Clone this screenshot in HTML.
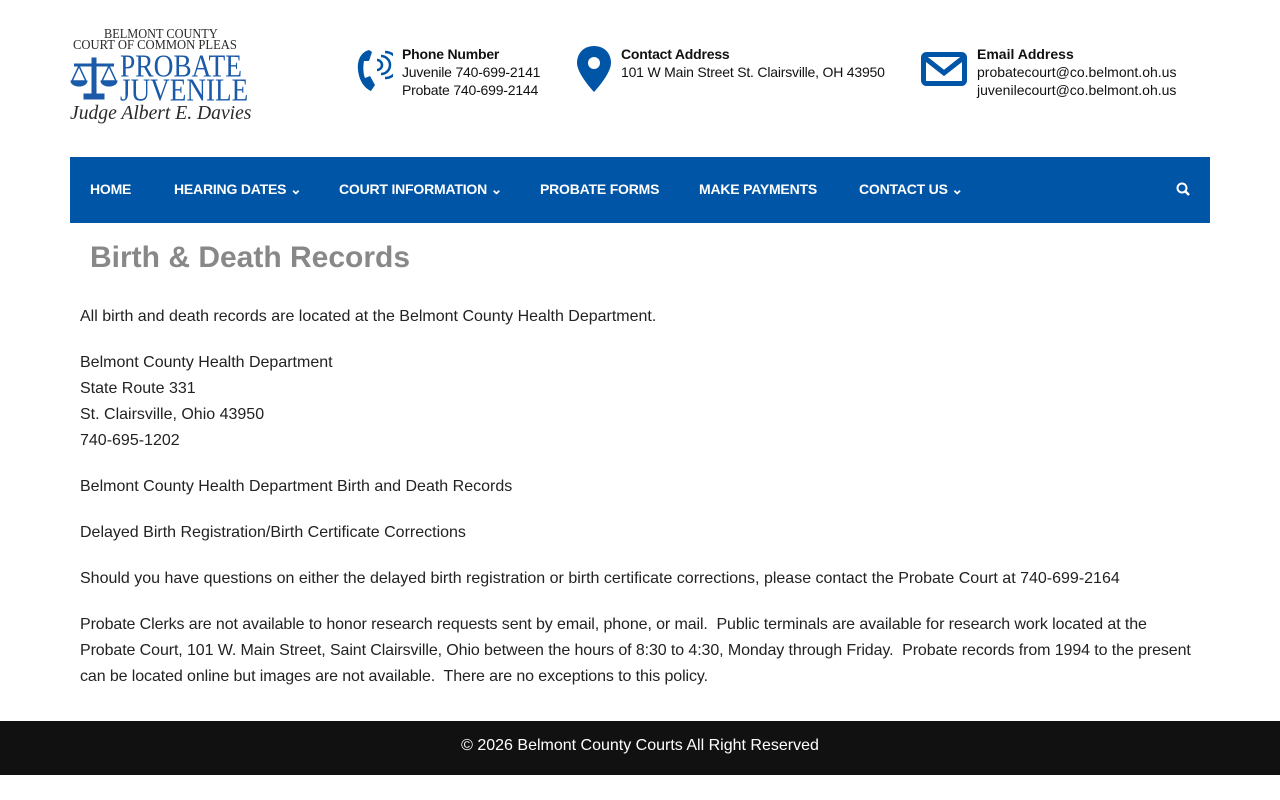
<!DOCTYPE html>
<html><head><meta charset="utf-8"><style>
body{margin:0;background:#fff;font-family:"Liberation Sans",sans-serif;color:#222;width:1280px;height:800px;position:relative;overflow:hidden}
.abs{position:absolute}
.logo div{position:absolute;white-space:nowrap;color:#2a2a2a;font-family:"Liberation Serif",serif;transform-origin:0 0}
.hd{font-size:14px;line-height:18px;color:#111}
.hd b{font-weight:bold}
nav{position:absolute;left:70px;top:157px;width:1140px;height:66px;background:#0055a6}
nav span{position:absolute;top:24px;color:#fff;font-weight:bold;font-size:14px;white-space:nowrap;letter-spacing:-0.2px}
h1{position:absolute;left:90px;top:241px;margin:0;font-size:30px;color:#888;font-weight:bold}
.c{position:absolute;left:80px;font-size:16px;line-height:26px;color:#222;width:1130px;white-space:nowrap}
footer{position:absolute;left:0;top:721px;width:1280px;height:54px;background:#111;color:#fff;text-align:center;line-height:50px;font-size:16px}
</style></head><body>
<div class="logo">
<div style="left:104px;top:27px;font-size:14px;transform:scaleX(0.88)">BELMONT COUNTY</div>
<div style="left:73px;top:38px;font-size:14px;transform:scaleX(0.9)">COURT OF COMMON PLEAS</div>
<div style="left:120px;top:49px;font-size:28px;color:#1a5aa8;transform:scale(0.98,1.15)">PROBATE</div>
<div style="left:120px;top:73px;font-size:28px;color:#1a5aa8;transform:scale(0.97,1.15)">JUVENILE</div>
<div style="left:70px;top:102px;font-size:20px;font-style:italic;transform:scaleX(0.98)">Judge Albert E. Davies</div>
<svg class="abs" style="left:70px;top:55px" width="48" height="46" viewBox="0 0 48 46" fill="#1a5aa8" stroke="#1a5aa8"><rect x="22" y="3" width="4" height="36"/><rect x="14" y="39" width="20" height="5"/><line x1="4" y1="10" x2="44" y2="10" stroke-width="3"/><path d="M2 26 L9 11 L16 26 Z M32 26 L39 11 L46 26 Z" fill="none" stroke-width="1.5"/><path d="M1 26 h16 a8 5 0 0 1 -16 0z M31 26 h16 a8 5 0 0 1 -16 0z"/></svg>
</div>
<svg class="abs" style="left:357px;top:46px" width="36" height="46" viewBox="0 0 36 46"><path d="M12 4 C4 6 0 14 1 24 C2 34 7 42 14 45 L18 39 L13 30 L8 32 C6 27 6 20 7 15 L12 15 L15 6 Z" fill="#0055a6"/><path d="M20 14 a5 5 0 0 1 0 10 M24 10 a9 9 0 0 1 0 18 M28 6 a13 13 0 0 1 0 26" fill="none" stroke="#0055a6" stroke-width="2.5"/></svg>
<div class="abs hd" style="left:402px;top:45px;letter-spacing:-0.2px"><b>Phone Number</b><br>Juvenile 740-699-2141<br>Probate 740-699-2144</div>
<svg class="abs" style="left:577px;top:46px" width="34" height="46" viewBox="0 0 34 46"><path d="M17 0 C7 0 0 7 0 17 C0 28 17 46 17 46 C17 46 34 28 34 17 C34 7 27 0 17 0 Z" fill="#0055a6"/><circle cx="17" cy="17" r="6" fill="#fff"/></svg>
<div class="abs hd" style="left:621px;top:45px;letter-spacing:-0.2px"><b>Contact Address</b><br>101 W Main Street St. Clairsville, OH 43950</div>
<svg class="abs" style="left:921px;top:52px" width="46" height="34" viewBox="0 0 46 34"><rect x="2.5" y="2.5" width="41" height="29" rx="3" fill="none" stroke="#0055a6" stroke-width="5"/><path d="M4 6 L23 21 L42 6" fill="none" stroke="#0055a6" stroke-width="5"/></svg>
<div class="abs hd" style="left:977px;top:45px"><b>Email Address</b><br>probatecourt@co.belmont.oh.us<br>juvenilecourt@co.belmont.oh.us</div>
<nav>
<span style="left:20px">HOME</span>
<span style="left:104px">HEARING DATES ⌄</span>
<span style="left:269px">COURT INFORMATION ⌄</span>
<span style="left:470px">PROBATE FORMS</span>
<span style="left:629px">MAKE PAYMENTS</span>
<span style="left:789px">CONTACT US ⌄</span>
<svg class="abs" style="left:1106px;top:25px" width="14" height="14" viewBox="0 0 14 14"><circle cx="6" cy="6" r="4.5" fill="none" stroke="#fff" stroke-width="2"/><line x1="9" y1="9" x2="13" y2="13" stroke="#fff" stroke-width="2.5"/></svg>
</nav>
<h1>Birth &amp; Death Records</h1>
<div class="c" style="top:304px">All birth and death records are located at the Belmont County Health Department.</div>
<div class="c" style="top:350px">Belmont County Health Department<br>State Route 331<br>St. Clairsville, Ohio 43950<br>740-695-1202</div>
<div class="c" style="top:474px">Belmont County Health Department Birth and Death Records</div>
<div class="c" style="top:520px">Delayed Birth Registration/Birth Certificate Corrections</div>
<div class="c" style="top:566px">Should you have questions on either the delayed birth registration or birth certificate corrections, please contact the Probate Court at 740-699-2164</div>
<div class="c" style="top:612px;letter-spacing:-0.1px">Probate Clerks are not available to honor research requests sent by email, phone, or mail.&nbsp; Public terminals are available for research work located at the<br>Probate Court, 101 W. Main Street, Saint Clairsville, Ohio between the hours of 8:30 to 4:30, Monday through Friday.&nbsp; Probate records from 1994 to the present<br>can be located online but images are not available.&nbsp; There are no exceptions to this policy.</div>
<footer>© 2026 Belmont County Courts All Right Reserved</footer>
</body></html>
